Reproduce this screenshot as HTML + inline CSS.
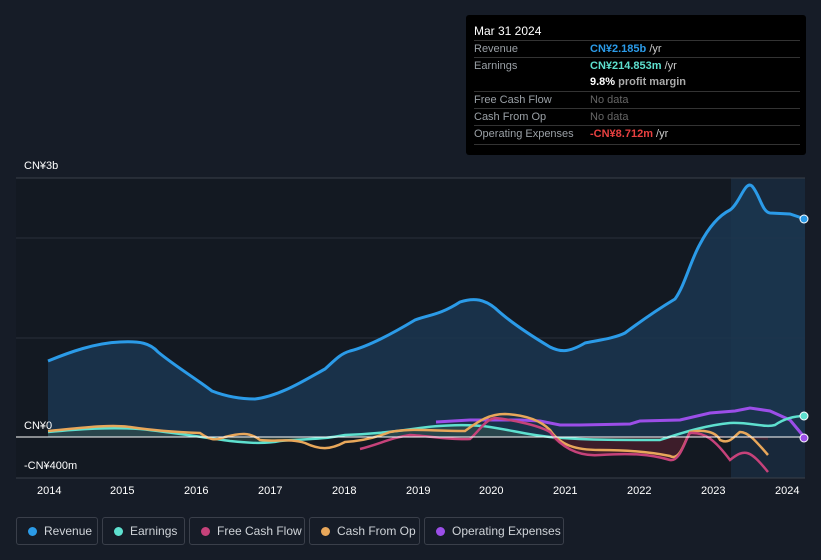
<!DOCTYPE html>
<html><head><meta charset="utf-8"><style>
body{margin:0;width:821px;height:560px;background:#161c27;font-family:"Liberation Sans",sans-serif;overflow:hidden;position:relative}
.tt{position:absolute;left:466px;top:15px;width:340px;height:140px;background:#000;border-radius:3px;font-size:11px;color:#9aa0a6}
.tt .h{position:absolute;left:8px;top:9px;color:#fff;font-size:12px}
.row{position:absolute;left:8px;width:326px;border-top:1px solid #333;height:17px;line-height:17px}
.row span.v{position:absolute;left:116px;font-weight:bold}
.leg{position:absolute;top:517px;height:28px;border:1px solid #3a3f4a;border-radius:3px;color:#cfd3d8;font-size:12px;line-height:26px;box-sizing:border-box;padding-left:27px}
.leg i{position:absolute;left:11px;top:9px;width:9px;height:9px;border-radius:50%}
.ax{position:absolute;color:#fff;font-size:11px}
</style></head><body>
<svg width="821" height="560" style="position:absolute;left:0;top:0">
<rect x="16" y="178" width="789" height="300" fill="#131922"/>
<rect x="731" y="178" width="74" height="300" fill="#18283a"/>
<line x1="16" y1="178" x2="805" y2="178" stroke="#3a404a"/>
<line x1="16" y1="238" x2="805" y2="238" stroke="#2a303a"/>
<line x1="16" y1="338" x2="805" y2="338" stroke="#2a303a"/>
<path d="M48,361 C70,352 95,343 120,342 C140,341 150,343 158,352 C175,366 195,378 212,391 C225,396 240,399 255,399 C280,396 305,380 325,369 C335,360 340,354 350,351 C370,346 395,332 415,320 C428,315 440,315 460,302 C475,297 485,300 495,308 C510,322 530,335 550,347 C560,352 568,353 585,343 C600,340 615,338 625,333 C645,318 665,305 675,299 C685,285 690,262 700,244 C710,225 720,215 730,210 C740,203 745,180 752,186 C760,195 762,212 770,213 L790,214 L805,219 L805,437 L48,437 Z" fill="#1b3650" opacity="0.85"/>
<path d="M48,432 C80,429 110,427 140,429 C170,432 200,437 230,441 L280,441 L345,435 L420,428 C440,425 470,424 490,427 L550,437 L48,437Z" fill="#3a5a50" opacity="0.5"/>
<path d="M550,437 C560,445 575,457 600,455 C630,453 650,454 670,460 C680,462 685,440 690,433 L768,440 L768,437Z" fill="#5a2030" opacity="0.6"/>
<path d="M48,361 C70,352 95,343 120,342 C140,341 150,343 158,352 C175,366 195,378 212,391 C225,396 240,399 255,399 C280,396 305,380 325,369 C335,360 340,354 350,351 C370,346 395,332 415,320 C428,315 440,315 460,302 C475,297 485,300 495,308 C510,322 530,335 550,347 C560,352 568,353 585,343 C600,340 615,338 625,333 C645,318 665,305 675,299 C685,285 690,262 700,244 C710,225 720,215 730,210 C740,203 745,180 752,186 C760,195 762,212 770,213 L790,214 L805,219" fill="none" stroke="#2b9be8" stroke-width="3"/>
<path d="M436,422 L470,420 L520,420 L540,421 L560,425 L580,425 L630,424 L640,421 L680,420 L710,413 L735,411 L750,408 L770,411 L790,420 L805,438" fill="none" stroke="#9b4ee8" stroke-width="3"/>
<path d="M48,432 C80,429 110,427 140,429 C170,432 200,437 230,441 C250,443 265,444 280,441 C300,439 320,440 345,435 C370,434 400,431 420,428 C440,425 470,424 490,427 C510,430 530,435 550,437 C580,440 620,440 660,440 C690,430 710,425 730,423 C750,422 765,428 775,425 C785,418 795,416 805,416" fill="none" stroke="#5ee0cf" stroke-width="2.5"/>
<path d="M48,431 C80,428 110,424 130,427 C150,430 170,432 200,433 C210,440 215,441 225,437 C240,433 250,432 260,440 C275,442 290,438 305,443 C320,450 330,450 345,442 C360,441 375,438 390,432 C410,428 430,431 465,431 C480,420 490,414 505,414 C525,415 540,420 550,430 C560,445 575,450 600,450 C630,450 650,452 670,456 C680,462 685,440 690,432 C700,430 715,430 720,440 C730,445 735,435 740,432 C748,432 755,440 768,455" fill="none" stroke="#e8a75a" stroke-width="2.5"/>
<path d="M360,449 C380,444 390,438 410,435 C430,436 450,440 470,439 C480,430 485,420 495,418 C515,420 540,426 550,432 C560,445 575,457 600,455 C630,453 650,454 670,460 C680,462 685,440 690,433 C705,432 715,440 730,460 C745,448 750,450 768,472" fill="none" stroke="#c6427a" stroke-width="2.5"/>
<line x1="16" y1="437" x2="805" y2="437" stroke="#fff" stroke-width="1"/>
<line x1="16" y1="478" x2="805" y2="478" stroke="#3a404a"/>
<circle cx="804" cy="219" r="4" fill="#2b9be8" stroke="#fff" stroke-width="1"/>
<circle cx="804" cy="416" r="4" fill="#5ee0cf" stroke="#fff" stroke-width="1"/>
<circle cx="804" cy="438" r="4" fill="#9b4ee8" stroke="#fff" stroke-width="1"/>
</svg>
<div class="ax" style="left:24px;top:160px">CN¥3b</div>
<div class="ax" style="left:24px;top:420px">CN¥0</div>
<div class="ax" style="left:24px;top:460px">-CN¥400m</div>
<div class="ax" style="left:37px;top:485px">2014</div><div class="ax" style="left:110px;top:485px">2015</div><div class="ax" style="left:184px;top:485px">2016</div><div class="ax" style="left:258px;top:485px">2017</div><div class="ax" style="left:332px;top:485px">2018</div><div class="ax" style="left:406px;top:485px">2019</div><div class="ax" style="left:479px;top:485px">2020</div><div class="ax" style="left:553px;top:485px">2021</div><div class="ax" style="left:627px;top:485px">2022</div><div class="ax" style="left:701px;top:485px">2023</div><div class="ax" style="left:775px;top:485px">2024</div>
<div class="tt">
<div class="h">Mar 31 2024</div>
<div class="row" style="top:25px">Revenue<span class="v" style="color:#2b9be8">CN¥2.185b <b style="color:#ccc;font-weight:normal">/yr</b></span></div>
<div class="row" style="top:42px">Earnings<span class="v" style="color:#5ee0cf">CN¥214.853m <b style="color:#ccc;font-weight:normal">/yr</b></span></div>
<div class="row" style="top:59px;border-top:none"><span class="v" style="color:#fff">9.8% <b style="color:#aaa">profit margin</b></span></div>
<div class="row" style="top:76px">Free Cash Flow<span class="v" style="color:#666;font-weight:normal">No data</span></div>
<div class="row" style="top:93px">Cash From Op<span class="v" style="color:#666;font-weight:normal">No data</span></div>
<div class="row" style="top:110px">Operating Expenses<span class="v" style="color:#e84040">-CN¥8.712m <b style="color:#ccc;font-weight:normal">/yr</b></span></div>
<div class="row" style="top:129px;height:0"></div>
</div>
<div class="leg" style="left:16px;width:82px"><i style="background:#2b9be8"></i>Revenue</div>
<div class="leg" style="left:102px;width:83px"><i style="background:#5ee0cf"></i>Earnings</div>
<div class="leg" style="left:189px;width:116px"><i style="background:#c6427a"></i>Free Cash Flow</div>
<div class="leg" style="left:309px;width:111px"><i style="background:#e8a75a"></i>Cash From Op</div>
<div class="leg" style="left:424px;width:140px"><i style="background:#9b4ee8"></i>Operating Expenses</div>
</body></html>
